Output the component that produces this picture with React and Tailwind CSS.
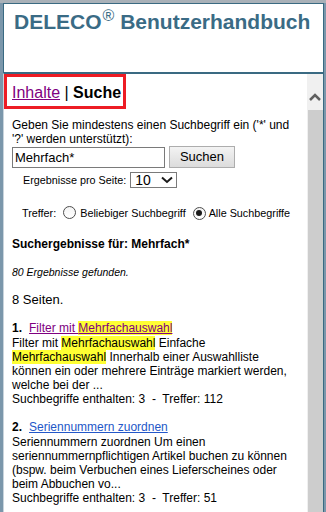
import React from 'react';

const Mark = ({ children }) => <span className="bg-[#ffff33]">{children}</span>;

const Radio = ({ checked }) => (
  <span className="inline-flex items-center justify-center w-[13px] h-[13px] rounded-full border border-[#4d4d4d] bg-gradient-to-b from-[#f4f4f4] to-white shrink-0">
    {checked && <span className="w-[6px] h-[6px] rounded-full bg-[#1a1a1a]" />}
  </span>
);

const results = [
  {
    n: '1.',
    title: (
      <>
        Filter mit <Mark>Mehrfachauswahl</Mark>
      </>
    ),
    visited: true,
    body: (
      <>
        Filter mit <Mark>Mehrfachauswahl</Mark> Einfache <Mark>Mehrfachauswahl</Mark> Innerhalb einer Auswahlliste können ein oder mehrere Einträge markiert werden, welche bei der ...
      </>
    ),
    hits: '112',
  },
  {
    n: '2.',
    title: <>Seriennummern zuordnen</>,
    visited: false,
    body: (
      <>
        Seriennummern zuordnen Um einen seriennummernpflichtigen Artikel buchen zu können (bspw. beim Verbuchen eines Lieferscheines oder beim Abbuchen vo...
      </>
    ),
    hits: '51',
  },
];

export default function App() {
  return (
    <div className="w-[326px] h-[512px] overflow-hidden bg-[#7b97ab] flex flex-col font-['Liberation_Sans',Arial,sans-serif] text-black">
      <div className="h-[3px] bg-[#a9b1b8] shrink-0" />

      {/* header */}
      <div className="ml-[3px] mr-[2px] h-[70px] shrink-0 bg-white border border-[#3a6a82] pl-[10px] pt-[6px]">
        <h1 className="text-[21px] font-bold leading-[normal] text-[#3a6b85] whitespace-nowrap">
          DELECO<sup className="text-[16px] font-normal ml-[1px]">®</sup> Benutzerhandbuch
        </h1>
      </div>

      {/* content panel */}
      <div className="ml-[3px] mr-[2px] flex-1 min-h-0 flex bg-white border-t border-r border-[#3a6a82] border-l border-l-[#c9d4dc]">
        <div className="flex-1 min-w-0 overflow-hidden">
          <div className="w-[122px] h-[35px] border-[3px] border-[#ed1c24] pl-[5px] pt-[7px] text-[16px] leading-[normal] whitespace-nowrap">
            <a className="text-[#800080] underline">Inhalte</a> | <b>Suche</b>
          </div>

          <div className="pl-[8px] pr-[4px] text-[12px] leading-[normal]">
            <p className="mt-[9px]">Geben Sie mindestens einen Suchbegriff ein ('*' und '?' werden unterstützt):</p>

            <div className="flex items-start gap-[4px]">
              <div className="w-[153px] h-[21px] border border-[#7a7a7a] text-[13px] leading-[19px] pl-[2px] mt-px">Mehrfach*</div>
              <div className="w-[66px] h-[22px] border border-[#adadad] bg-gradient-to-b from-[#f3f3f3] to-[#dcdcdc] text-[13px] leading-[20px] text-center">
                Suchen
              </div>
            </div>

            <div className="mt-[4px] ml-[11px] flex items-center gap-[4px] h-[16px]">
              <span className="text-[10.8px]">Ergebnisse pro Seite:</span>
              <div className="w-[47px] h-[16px] border border-[#7a7a7a] flex items-center justify-between pl-[4px] pr-[3px]">
                <span className="text-[14px] leading-none">10</span>
                <svg width="12" height="8" viewBox="0 0 12 8">
                  <polyline points="1,1.5 6,6 11,1.5" fill="none" stroke="#1a1a1a" strokeWidth="2" />
                </svg>
              </div>
            </div>

            <div className="mt-[17px] ml-[10px] flex items-center h-[16px] text-[10.8px] whitespace-nowrap">
              <span>Treffer:</span>
              <span className="ml-[7px]"><Radio /></span>
              <span className="ml-[4px]">Beliebiger Suchbegriff</span>
              <span className="ml-[7px]"><Radio checked /></span>
              <span className="ml-[3px]">Alle Suchbegriffe</span>
            </div>

            <p className="mt-[16px] font-bold">Suchergebnisse für: Mehrfach*</p>

            <p className="mt-[15px] italic text-[10.5px]">80 Ergebnisse gefunden.</p>

            <p className="mt-[14px] text-[13px]">8 Seiten.</p>

            {results.map((r, i) => (
              <div key={i} className="mt-[14px]">
                <div className="mb-px whitespace-nowrap">
                  <b>{r.n}</b>
                  <span className="ml-[7px]" />
                  <a className={`underline ${r.visited ? 'text-[#800080]' : 'text-[#2357c8]'}`}>{r.title}</a>
                </div>
                <div className="pr-[10px]">{r.body}</div>
                <div>Suchbegriffe enthalten: 3&nbsp; -&nbsp; Treffer: {r.hits}</div>
              </div>
            ))}
          </div>
        </div>

        {/* scrollbar */}
        <div className="w-[16px] shrink-0 bg-[#f0f0f0] flex flex-col">
          <div className="h-[36px] flex items-center justify-center pt-[10px]">
            <svg width="12" height="8" viewBox="0 0 12 8">
              <polyline points="1,7 6,2 11,7" fill="none" stroke="#606060" strokeWidth="2.5" />
            </svg>
          </div>
          <div className="flex-1 ml-px bg-[#cdcdcd]" />
        </div>
      </div>
    </div>
  );
}
